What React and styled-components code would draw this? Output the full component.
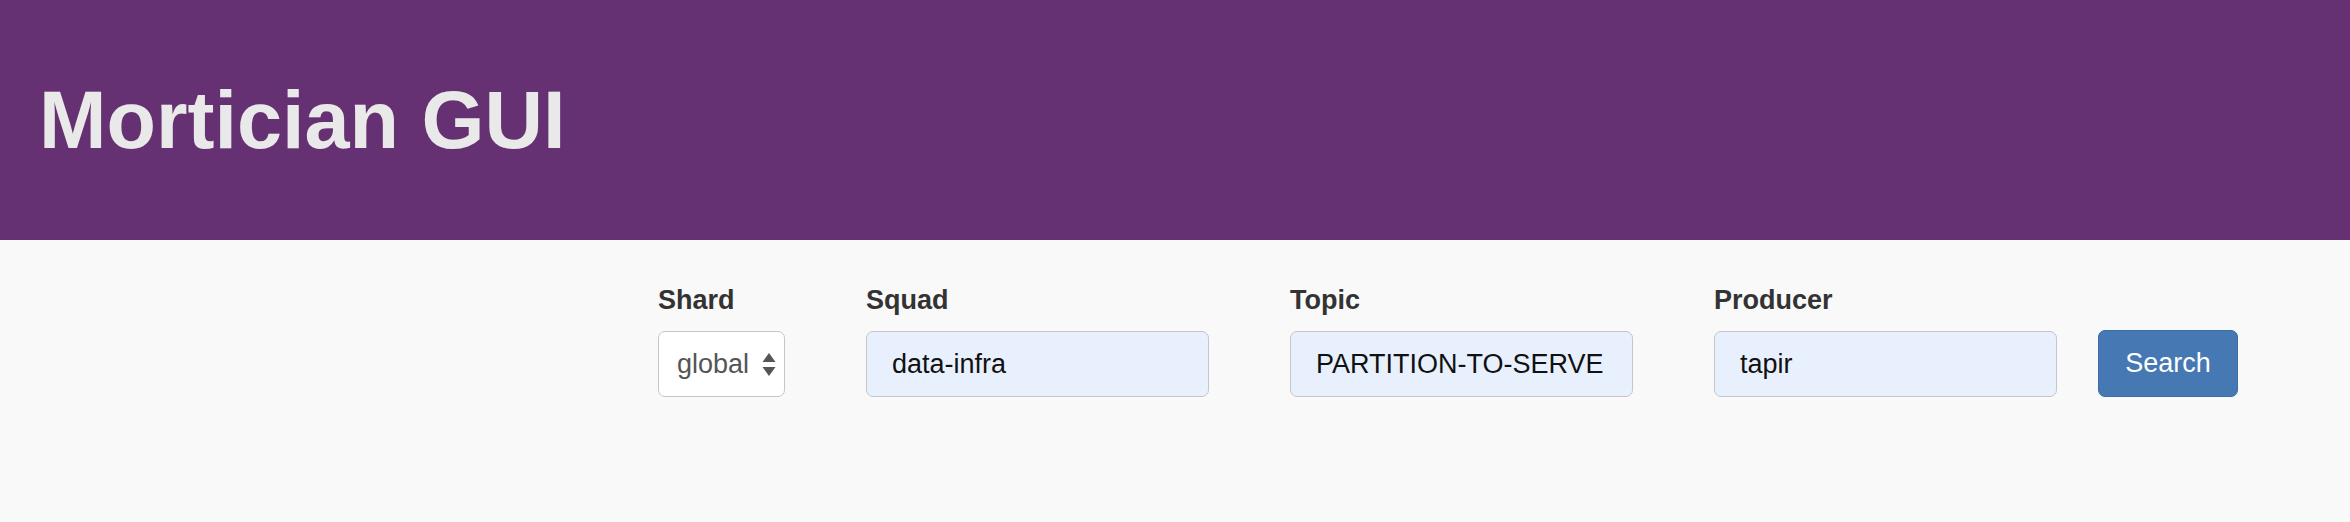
import React from 'react';
import styled, { createGlobalStyle } from 'styled-components';

const GlobalStyle = createGlobalStyle`
  html, body {
    margin: 0;
    padding: 0;
    background: #f9f9f9;
    font-family: "Liberation Sans", Arial, Helvetica, sans-serif;
  }
`;

const Header = styled.header`
  box-sizing: border-box;
  height: 240px;
  padding: 76px 0 0 39px;
  background: #653172;
`;

const Title = styled.h1`
  margin: 0;
  font-size: 81px;
  line-height: 89px;
  font-weight: 700;
  color: #e9e9e9;
`;

const SearchForm = styled.form`
  display: flex;
  justify-content: flex-end;
  align-items: flex-end;
  padding: 45px 112px 0 0;
`;

const Field = styled.div`
  display: flex;
  flex-direction: column;
  margin-right: ${({ gap }) => gap}px;
`;

const Label = styled.label`
  font-size: 27px;
  line-height: 31px;
  font-weight: 700;
  color: #333;
  margin-bottom: 15px;
`;

const SelectWrap = styled.div`
  position: relative;
  width: 127px;
  height: 66px;
`;

const Select = styled.select`
  appearance: none;
  -webkit-appearance: none;
  box-sizing: border-box;
  width: 100%;
  height: 100%;
  padding: 0 0 0 18px;
  border: 1.5px solid #c6c6c6;
  border-radius: 7px;
  background: #fff;
  font-family: inherit;
  font-size: 27px;
  color: #555;
`;

const Arrows = styled.svg`
  position: absolute;
  right: 9px;
  top: 22px;
  pointer-events: none;
`;

const Input = styled.input`
  box-sizing: border-box;
  width: 343px;
  height: 66px;
  padding: 0 25px;
  border: 1.5px solid #c6c6c6;
  border-radius: 7px;
  background: #e8f0fe;
  font-family: inherit;
  font-size: 27px;
  color: #111;
  outline: none;
`;

const Button = styled.button`
  box-sizing: border-box;
  width: 140px;
  height: 67px;
  border: 1.5px solid #3a6ea6;
  border-radius: 7px;
  background: #4679b3;
  color: #fff;
  font-family: inherit;
  font-size: 27px;
  cursor: pointer;
`;

export default function App() {
  return (
    <>
      <GlobalStyle />
      <Header>
        <Title>Mortician GUI</Title>
      </Header>
      <SearchForm onSubmit={(e) => e.preventDefault()}>
        <Field gap={81}>
          <Label>Shard</Label>
          <SelectWrap>
            <Select defaultValue="global">
              <option value="global">global</option>
            </Select>
            <Arrows width="14" height="23" viewBox="0 0 14 23">
              <path d="M7 0 L13.5 9 H0.5 Z" fill="#555" />
              <path d="M7 23 L13.5 14 H0.5 Z" fill="#555" />
            </Arrows>
          </SelectWrap>
        </Field>
        <Field gap={81}>
          <Label>Squad</Label>
          <Input defaultValue="data-infra" />
        </Field>
        <Field gap={81}>
          <Label>Topic</Label>
          <Input defaultValue="PARTITION-TO-SERVE" />
        </Field>
        <Field gap={41}>
          <Label>Producer</Label>
          <Input defaultValue="tapir" />
        </Field>
        <Button type="submit">Search</Button>
      </SearchForm>
    </>
  );
}
